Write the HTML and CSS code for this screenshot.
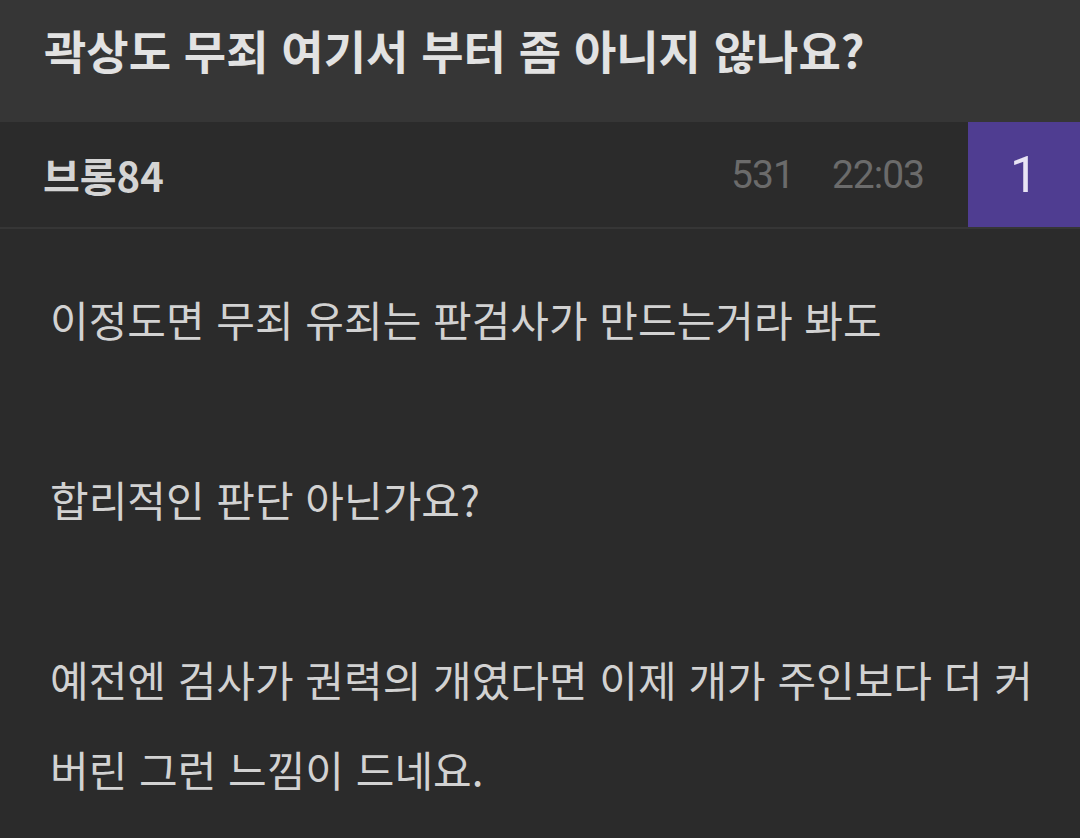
FILE: index.html
```html
<!DOCTYPE html>
<html lang="ko">
<head>
<meta charset="utf-8">
<link rel="stylesheet" href="styles.css">
</head>
<body>
<div class="page">
  <header class="title-bar">
    <h1 class="title">곽상도 무죄 여기서 부터 좀 아니지 않나요?</h1>
  </header>
  <div class="info-row">
    <div class="author">브롱84</div>
    <div class="meta">
      <span class="views">531</span>
      <span class="time">22:03</span>
    </div>
    <div class="comments">1</div>
  </div>
  <div class="content">
    <p>이정도면 무죄 유죄는 판검사가 만드는거라 봐도</p>
    <p class="blank">&nbsp;</p>
    <p>합리적인 판단 아닌가요?</p>
    <p class="blank">&nbsp;</p>
    <p>예전엔 검사가 권력의 개였다면 이제 개가 주인보다 더 커<br>버린 그런 느낌이 드네요.</p>
  </div>
</div>
</body>
</html>
```
FILE: styles.css
```css
html, body {
  margin: 0;
  padding: 0;
  background: #2b2b2b;
}
.page {
  width: 1080px;
  height: 838px;
  overflow: hidden;
  background: #2b2b2b;
  font-family: "Noto Sans CJK KR", "Noto Sans", sans-serif;
}
.title-bar {
  background: #363636;
  height: 122px;
  display: flex;
  align-items: center;
  padding: 0 44px;
  box-sizing: border-box;
}
.title {
  margin: 0;
  margin-top: -24px;
  font-size: 46px;
  font-weight: 700;
  color: #e2e2e2;
}
.info-row {
  display: flex;
  align-items: stretch;
  border-bottom: 2px solid #363636;
  box-sizing: border-box;
  height: 107px;
}
.author {
  flex: 1;
  display: flex;
  align-items: center;
  padding-left: 43px;
  font-size: 40px;
  font-weight: 700;
  color: #d4d4d4;
}
.meta {
  display: flex;
  align-items: center;
  gap: 38px;
  padding-right: 44px;
  font-family: Roboto, "Noto Sans", sans-serif;
  font-size: 39px;
  color: #6b6b6b;
  letter-spacing: -1px;
}
.comments {
  width: 112px;
  background: #4f3d91;
  display: flex;
  align-items: center;
  justify-content: center;
  font-family: Roboto, sans-serif;
  font-size: 50px;
  color: #e8e4f4;
}
.content {
  padding: 45px 0 0 50px;
  font-size: 42px;
  line-height: 90px;
  color: #d2d2d2;
}
.content p {
  margin: 0;
}
```
